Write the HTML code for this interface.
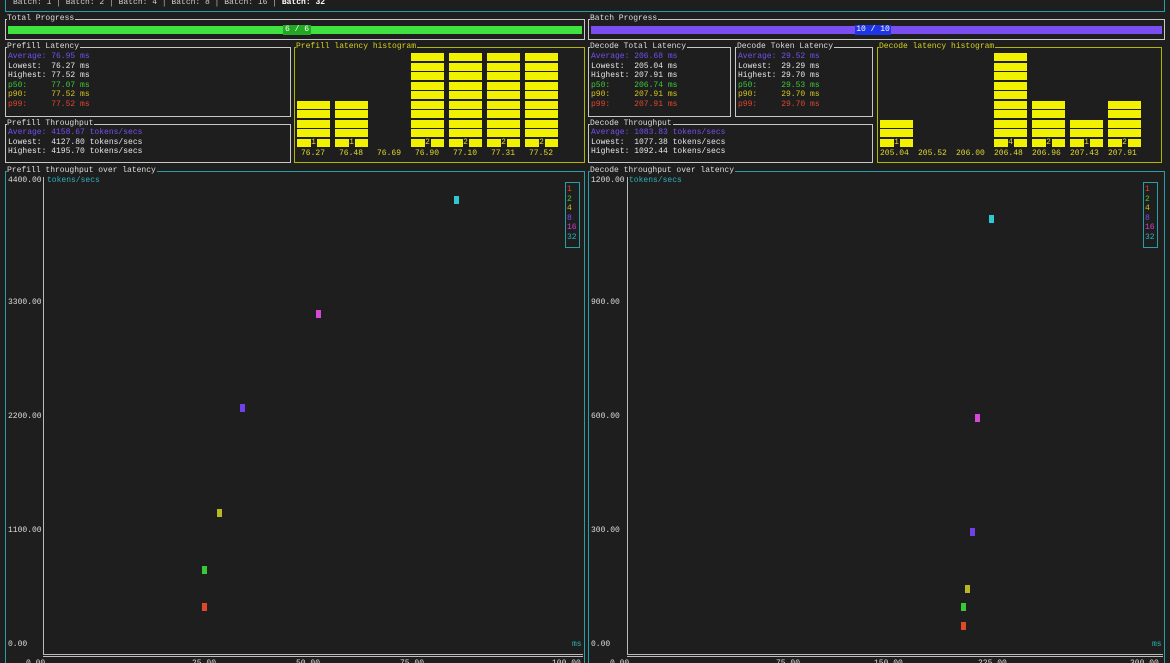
<!DOCTYPE html><html><head><meta charset="utf-8"><style>
*{margin:0;padding:0;box-sizing:border-box}
html,body{width:1170px;height:663px;overflow:hidden}
body{background:#1e1e1e;position:relative;font-family:"Liberation Mono",monospace;font-size:8px;line-height:9.5px;color:#e6e6e6}
div,span{position:absolute;white-space:pre}
.b{border:1px solid #c8c8c8}
.tl{border-color:#2a9ea6}
.y{border-color:#b5b500}
.t{top:-6px;left:1px;background:#1e1e1e;color:#ddd;padding-right:1px}
.p{color:#7350f0}.g{color:#3ec83e}.yl{color:#d4c61e}.r{color:#e2462c}
.seg{background:#f2f200;height:8px}
.lab{color:#e0d830}
.ax{color:#ddd}
.pt{width:5px;height:8px}
</style></head><body>
<div class="b tl" style="left:5px;top:-8px;width:1160px;height:20px"></div>
<div style="left:13px;top:-2px;color:#ccc">Batch: 1 │ Batch: 2 │ Batch: 4 │ Batch: 8 │ Batch: 16 │ <b style="color:#fff">Batch: 32</b></div>

<div class="b" style="left:5px;top:19px;width:580px;height:21px"><span class="t">Total Progress</span></div>
<div style="left:8px;top:26px;width:574px;height:8px;background:#3fe23f"></div>
<div style="left:283px;top:25px;width:28px;height:10px;background:#23a823;color:#fff;text-align:center;line-height:10px">6 / 6</div>
<div class="b" style="left:588px;top:19px;width:577px;height:21px"><span class="t">Batch Progress</span></div>
<div style="left:591px;top:26px;width:571px;height:8px;background:#7b4ef2"></div>
<div style="left:855px;top:25px;width:36px;height:10px;background:#1f34e6;color:#fff;text-align:center;line-height:10px">10 / 10</div>

<div class="b" style="left:5px;top:47px;width:286px;height:70px"><span class="t">Prefill Latency</span></div>
<div style="left:8px;top:52px"><span class="p" style="position:static">Average: 76.95 ms</span>
Lowest:  76.27 ms
Highest: 77.52 ms
<span class="g" style="position:static">p50:     77.07 ms</span>
<span class="yl" style="position:static">p90:     77.52 ms</span>
<span class="r" style="position:static">p99:     77.52 ms</span></div>
<div class="b" style="left:5px;top:124px;width:286px;height:39px"><span class="t">Prefill Throughput</span></div>
<div style="left:8px;top:128px"><span class="p" style="position:static">Average: 4158.67 tokens/secs</span>
Lowest:  4127.80 tokens/secs
Highest: 4195.70 tokens/secs</div>

<div class="b y" style="left:294px;top:47px;width:291px;height:116px"><span class="t" style="color:#d4d020">Prefill latency histogram</span></div>
<div class="b" style="left:588px;top:47px;width:143px;height:70px"><span class="t">Decode Total Latency</span></div>
<div style="left:591px;top:52px"><span class="p" style="position:static">Average: 206.68 ms</span>
Lowest:  205.04 ms
Highest: 207.91 ms
<span class="g" style="position:static">p50:     206.74 ms</span>
<span class="yl" style="position:static">p90:     207.91 ms</span>
<span class="r" style="position:static">p99:     207.91 ms</span></div>
<div class="b" style="left:735px;top:47px;width:138px;height:70px"><span class="t">Decode Token Latency</span></div>
<div style="left:738px;top:52px"><span class="p" style="position:static">Average: 29.52 ms</span>
Lowest:  29.29 ms
Highest: 29.70 ms
<span class="g" style="position:static">p50:     29.53 ms</span>
<span class="yl" style="position:static">p90:     29.70 ms</span>
<span class="r" style="position:static">p99:     29.70 ms</span></div>
<div class="b" style="left:588px;top:124px;width:285px;height:39px"><span class="t">Decode Throughput</span></div>
<div style="left:591px;top:128px"><span class="p" style="position:static">Average: 1083.83 tokens/secs</span>
Lowest:  1077.38 tokens/secs
Highest: 1092.44 tokens/secs</div>
<div class="b y" style="left:877px;top:47px;width:285px;height:116px"><span class="t" style="color:#d4d020">Decode latency histogram</span></div>

<div id="hist"></div>

<div class="b tl" style="left:5px;top:171px;width:580px;height:500px"><span class="t">Prefill throughput over latency</span></div>
<div class="b tl" style="left:588px;top:171px;width:577px;height:500px"><span class="t">Decode throughput over latency</span></div>

<div style="left:43px;top:177px;width:1px;height:478px;background:#bbb"></div>
<div style="left:43px;top:654px;width:540px;height:3px;border-top:1px solid #bbb;border-bottom:1px solid #bbb"></div>
<div style="left:627px;top:177px;width:1px;height:478px;background:#bbb"></div>
<div style="left:627px;top:654px;width:536px;height:3px;border-top:1px solid #bbb;border-bottom:1px solid #bbb"></div>

<div class="ax" style="left:8px;top:176px">4400.00</div>
<div class="ax" style="left:8px;top:298px">3300.00</div>
<div class="ax" style="left:8px;top:412px">2200.00</div>
<div class="ax" style="left:8px;top:526px">1100.00</div>
<div class="ax" style="left:8px;top:640px">0.00</div>
<div style="left:47px;top:176px;color:#2fb0b8">tokens/secs</div>
<div style="left:572px;top:640px;color:#2fb0b8">ms</div>
<div class="ax" style="left:591px;top:176px">1200.00</div>
<div class="ax" style="left:591px;top:298px">900.00</div>
<div class="ax" style="left:591px;top:412px">600.00</div>
<div class="ax" style="left:591px;top:526px">300.00</div>
<div class="ax" style="left:591px;top:640px">0.00</div>
<div style="left:629px;top:176px;color:#2fb0b8">tokens/secs</div>
<div style="left:1152px;top:640px;color:#2fb0b8">ms</div>

<div class="ax" style="left:26px;top:659px">0.00</div>
<div class="ax" style="left:192px;top:659px">25.00</div>
<div class="ax" style="left:296px;top:659px">50.00</div>
<div class="ax" style="left:400px;top:659px">75.00</div>
<div class="ax" style="left:552px;top:659px">100.00</div>
<div class="ax" style="left:610px;top:659px">0.00</div>
<div class="ax" style="left:776px;top:659px">75.00</div>
<div class="ax" style="left:874px;top:659px">150.00</div>
<div class="ax" style="left:978px;top:659px">225.00</div>
<div class="ax" style="left:1130px;top:659px">300.00</div>

<div class="b tl" style="left:565px;top:182px;width:15px;height:66px"></div>
<div style="left:567px;top:185px;line-height:9.5px"><span class="r" style="position:static">1</span>
<span class="g" style="position:static">2</span>
<span class="yl" style="position:static">4</span>
<span class="p" style="position:static">8</span>
<span style="position:static;color:#d040d0">16</span>
<span style="position:static;color:#2fb0b8">32</span></div>
<div class="b tl" style="left:1143px;top:182px;width:15px;height:66px"></div>
<div style="left:1145px;top:185px;line-height:9.5px"><span class="r" style="position:static">1</span>
<span class="g" style="position:static">2</span>
<span class="yl" style="position:static">4</span>
<span class="p" style="position:static">8</span>
<span style="position:static;color:#d040d0">16</span>
<span style="position:static;color:#2fb0b8">32</span></div>

<div class="pt" style="left:454px;top:196px;background:#30c8d0"></div>
<div class="pt" style="left:316px;top:310px;background:#d848d8"></div>
<div class="pt" style="left:240px;top:404px;background:#7040e8"></div>
<div class="pt" style="left:217px;top:509px;background:#b8b820"></div>
<div class="pt" style="left:202px;top:566px;background:#38c838"></div>
<div class="pt" style="left:202px;top:603px;background:#e04828"></div>
<div class="pt" style="left:989px;top:215px;background:#30c8d0"></div>
<div class="pt" style="left:975px;top:414px;background:#d848d8"></div>
<div class="pt" style="left:970px;top:528px;background:#7040e8"></div>
<div class="pt" style="left:965px;top:585px;background:#b8b820"></div>
<div class="pt" style="left:961px;top:603px;background:#38c838"></div>
<div class="pt" style="left:961px;top:622px;background:#e04828"></div>

<script>
(function(){
var h=document.getElementById('hist'),out='';
function bars(xs,w,hs,ns,labs,lx){
 for(var i=0;i<xs.length;i++){
  for(var r=0;r<hs[i];r++){
   var top=138.5-r*9.5;
   out+='<div class="seg" style="left:'+xs[i]+'px;top:'+top+'px;width:'+w+'px"></div>';
  }
  if(hs[i]>0) out+='<div style="left:'+(xs[i]+w/2-3)+'px;top:138px;background:#1e1e1e;color:#e0d830;width:6px;text-align:center;line-height:9px">'+ns[i]+'</div>';
  out+='<div class="lab" style="left:'+lx[i]+'px;top:148.5px">'+labs[i]+'</div>';
 }
}
bars([297,335,373,411,449,487,525],33,[5,5,0,10,10,10,10],[1,1,0,2,2,2,2],['76.27','76.48','76.69','76.90','77.10','77.31','77.52'],[301,339,377,415,453,491,529]);
bars([880,918,956,994,1032,1070,1108],33,[3,0,0,10,5,3,5],[1,0,0,4,2,1,2],['205.04','205.52','206.00','206.48','206.96','207.43','207.91'],[880,918,956,994,1032,1070,1108]);
h.outerHTML=out;
})();
</script>
</body></html>
